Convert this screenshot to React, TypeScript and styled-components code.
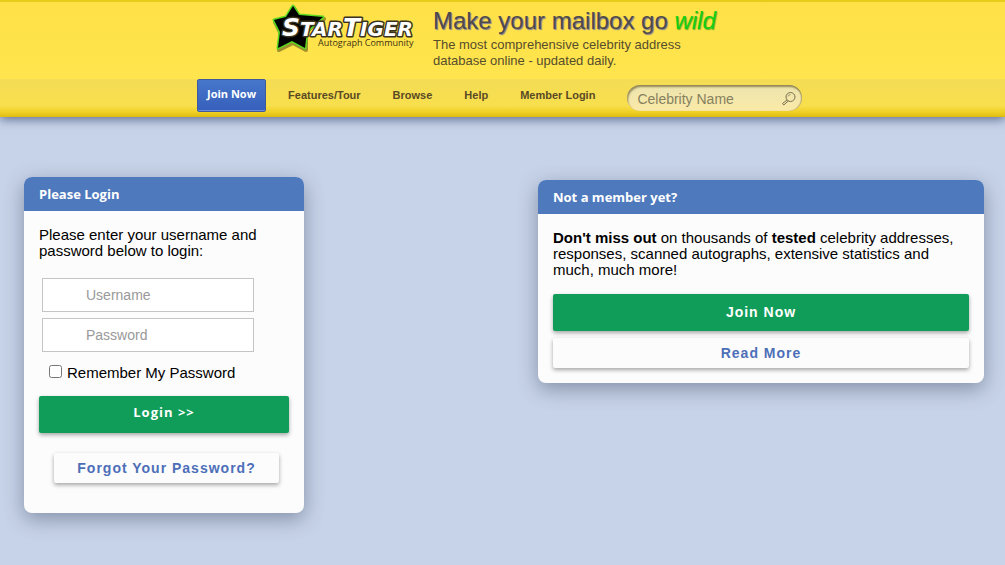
import React, { useState } from 'react';
import styled, { createGlobalStyle, css } from 'styled-components';

const sans = `'Liberation Sans', Arial, sans-serif`;
const display = `'Open Sans', 'Noto Sans', sans-serif`;

const GlobalStyle = createGlobalStyle`
  *, *::before, *::after { box-sizing: border-box; }
  body {
    margin: 0;
    background: #c7d3e8;
    color: #000;
    font: 15px/16px ${sans};
  }
  h1, h2, p { margin: 0; }
  a { text-decoration: none; }
`;

const Header = styled.header`
  background: linear-gradient(#ffe147, #ffe651);
  border-top: 2px solid #e8cc1c;
  box-shadow: 0 2px 10px rgba(50, 65, 105, 0.75);
`;

const Container = styled.div`
  display: flex;
  max-width: 611px;
  margin: 0 auto;
`;

const Banner = styled(Container)`
  gap: 16px;
  height: 77px;
  padding-left: 74px;
`;

const LogoLink = styled.a`
  display: block;
  height: 52px;
  flex: none;
`;

const Tagline = styled.div`
  padding-top: 5px;
  color: #564d2c;
  font-size: 13px;
`;

const Headline = styled.h1`
  margin-bottom: 2px;
  color: #4f4a4a;
  font-size: 24px;
  font-weight: 400;
  line-height: 28px;
  text-shadow: 1px 1px 1px #7d7890;
`;

const Wild = styled.em`
  color: #14cf14;
  text-shadow: 1px 1px 1px #6fae20;
`;

const Summary = styled.p`
  max-width: 270px;
`;

const NavBar = styled.nav`
  height: 38px;
  background: linear-gradient(#f4dc55, #f8df4d 70%, #efcf24 88%, #dfbb12);
`;

const NavLink = styled.a`
  padding: 0 16px;
  color: #5a4a24;
  font-size: 11px;
  font-weight: 700;
  line-height: 32px;
  white-space: nowrap;
`;

const JoinLink = styled(NavLink)`
  height: 33px;
  margin-right: 6px;
  padding: 0 9px;
  border: 1px solid #3f5b9c;
  border-radius: 2px;
  background: linear-gradient(#4677cb, #365fbb);
  box-shadow: inset 0 -1px 0 #6b8fdc;
  color: #fff;
  font-family: ${display};
  line-height: 28px;
`;

const Search = styled.form`
  display: flex;
  align-items: center;
  width: 175px;
  height: 26px;
  margin: 6px 0 0 16px;
  padding: 0 5px 0 10px;
  border-radius: 13px;
  background: linear-gradient(#ece4ae, #fbeaa8);
  box-shadow: inset 1px 2px 2px rgba(90, 75, 30, 0.6), inset -1px 0 1px rgba(90, 75, 30, 0.4);
`;

const SearchInput = styled.input`
  flex: 1;
  min-width: 0;
  padding: 2px 0 0;
  border: 0;
  outline: 0;
  background: none;
  font: 14px/20px ${sans};
  &::placeholder { color: #85805f; opacity: 1; }
`;

const SearchButton = styled.button`
  display: flex;
  padding: 2px 0 0;
  border: 0;
  background: none;
`;

const Main = styled.main`
  display: flex;
  justify-content: space-between;
  align-items: flex-start;
  gap: 24px;
  padding: 60px 21px 40px 24px;
`;

const Card = styled.section<{ $wide?: boolean }>`
  width: ${p => (p.$wide ? 446 : 280)}px;
  margin-top: ${p => (p.$wide ? 3 : 0)}px;
  border-radius: 8px;
  background: #fcfcfc;
  box-shadow: 0 6px 20px rgba(50, 65, 90, 0.45);
`;

const CardTitle = styled.h2`
  height: 34px;
  padding: 0 15px;
  border-radius: 8px 8px 0 0;
  background: #4e79bd;
  color: #fff;
  font: 700 13px/34px ${display};
`;

const CardBody = styled.div<{ $tall?: boolean }>`
  padding: 16px 15px ${p => (p.$tall ? 30 : 15)}px;
`;

const Fields = styled.div`
  display: grid;
  gap: 6px;
  padding: 19px 35px 0 3px;
`;

const Field = styled.input`
  width: 100%;
  height: 34px;
  padding: 0 8px 0 43px;
  border: 1px solid #c4c4c4;
  background: #fff;
  font: 14px/20px ${sans};
  &::placeholder { color: #999; opacity: 1; }
`;

const Remember = styled.label`
  display: flex;
  align-items: center;
  gap: 5px;
  height: 16px;
  margin: 13px 0 15px 10px;
`;

const Tick = styled.input`
  width: 13px;
  height: 13px;
  margin: 0 0 3px;
`;

const buttonLook = css<{ $plain?: boolean }>`
  display: block;
  width: 100%;
  height: ${p => (p.$plain ? 30 : 37)}px;
  padding: 0;
  border: 0;
  border-radius: 2px;
  background: ${p => (p.$plain ? '#fcfcfd' : '#109d59')};
  box-shadow: 0 2px 4px rgba(0, 0, 0, 0.35);
  color: ${p => (p.$plain ? '#4d6fb8' : '#fff')};
  font: 700 14px/${p => (p.$plain ? 30 : 36)}px ${sans};
  letter-spacing: 1px;
  text-align: center;
`;

const SubmitButton = styled.button`
  ${buttonLook}
  padding-bottom: 5px;
  font: 700 13px/32px ${display};
`;

const ButtonLink = styled.a<{ $plain?: boolean }>`
  ${buttonLook}
`;

const Forgot = styled.div`
  padding: 20px 10px 0 15px;
`;

const Actions = styled.div`
  display: grid;
  gap: 7px;
  padding-top: 16px;
`;

function Logo() {
  return (
    <svg width="146" height="52" viewBox="0 0 146 52" role="img" aria-label="StarTiger Autograph Community">
      <path
        d="M23 6 L28 15 L53 17 L35 29 L35 48 L22 41 L8 48 L10 32 L4 20 L15 17 Z"
        fill="#786c22" stroke="#786c22" strokeWidth="4" strokeLinejoin="round" opacity="0.7"
      />
      <path
        d="M22 4 L28 13 L52 15 L36 29 L34 46 L21 39 L7 46 L9 30 L3 18 L15 15 Z"
        fill="#000" stroke="#58d820" strokeWidth="3" strokeLinejoin="round"
      />
      <path d="M22 4 L28 13 L52 15 L36 29 L34 46 L21 39 L7 46 L9 30 L3 18 L15 15 Z" />
      <g
        fontFamily="'DejaVu Sans', sans-serif" fontWeight="700" fontStyle="italic"
        strokeLinejoin="round" paintOrder="stroke"
      >
        <text x="11" y="34" fill="#fff" stroke="#39321f" strokeWidth="3" fontSize="20">
          <tspan fontSize="25">S</tspan>TAR<tspan fontSize="25">T</tspan>IGER
        </text>
      </g>
      <text x="47" y="44" fill="#3c3213" fontFamily={display} fontSize="9" fontWeight="500">
        Autograph Community
      </text>
    </svg>
  );
}

function SearchIcon() {
  return (
    <svg width="16" height="16" viewBox="0 0 16 16" fill="none" stroke="#77704d">
      <circle cx="9.5" cy="6" r="4.5" />
      <path d="M6 9 L1.5 12.5 L2.8 14 L7.2 10" />
      <path d="M7 5.5 Q7.5 3.7 9.5 3.5" strokeWidth="0.7" />
    </svg>
  );
}

export default function App() {
  const [remember, setRemember] = useState(false);
  return (
    <>
      <GlobalStyle />
      <Header>
        <Banner>
          <LogoLink href="#"><Logo /></LogoLink>
          <Tagline>
            <Headline>Make your mailbox go <Wild>wild</Wild></Headline>
            <Summary>The most comprehensive celebrity address database online - updated daily.</Summary>
          </Tagline>
        </Banner>
        <NavBar>
          <Container>
            <JoinLink href="#join">Join Now</JoinLink>
            <NavLink href="#features">Features/Tour</NavLink>
            <NavLink href="#browse">Browse</NavLink>
            <NavLink href="#help">Help</NavLink>
            <NavLink href="#login">Member Login</NavLink>
            <Search role="search">
              <SearchInput aria-label="Celebrity Name" placeholder="Celebrity Name" />
              <SearchButton type="button" aria-label="Search"><SearchIcon /></SearchButton>
            </Search>
          </Container>
        </NavBar>
      </Header>
      <Main>
        <Card>
          <CardTitle>Please Login</CardTitle>
          <CardBody as="form" $tall>
            <p>Please enter your username and password below to login:</p>
            <Fields>
              <Field aria-label="Username" placeholder="Username" autoComplete="username" />
              <Field type="password" aria-label="Password" placeholder="Password" autoComplete="current-password" />
            </Fields>
            <Remember>
              <Tick type="checkbox" checked={remember} onChange={e => setRemember(e.target.checked)} />
              Remember My Password
            </Remember>
            <SubmitButton type="button">Login &gt;&gt;</SubmitButton>
            <Forgot>
              <ButtonLink $plain href="#forgot">Forgot Your Password?</ButtonLink>
            </Forgot>
          </CardBody>
        </Card>
        <Card $wide>
          <CardTitle>Not a member yet?</CardTitle>
          <CardBody>
            <p>
              <b>Don't miss out</b> on thousands of <b>tested</b> celebrity addresses, responses,
              scanned autographs, extensive statistics and much, much more!
            </p>
            <Actions>
              <ButtonLink href="#join">Join Now</ButtonLink>
              <ButtonLink $plain href="#more">Read More</ButtonLink>
            </Actions>
          </CardBody>
        </Card>
      </Main>
    </>
  );
}
